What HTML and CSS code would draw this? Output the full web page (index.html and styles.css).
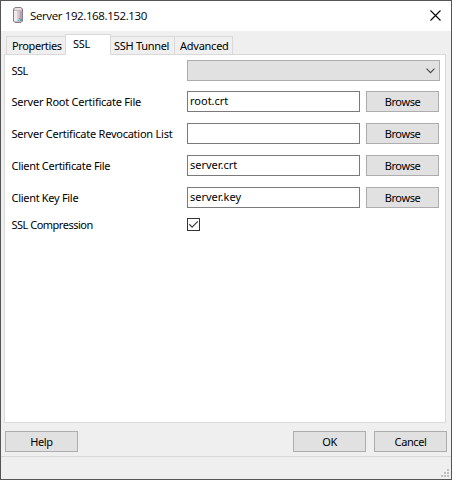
FILE: index.html
```
<!DOCTYPE html>
<html lang="en">
<head>
<meta charset="utf-8">
<title>Server 192.168.152.130</title>
<link rel="stylesheet" href="styles.css">
</head>
<body>
<div class="window">
  <header class="titlebar">
    <svg class="server-icon" width="12" height="18" viewBox="0 0 12 18">
      <path d="M1.5 3L3 1.5h6L10.5 3v12L9 16.5H3L1.5 15z" fill="#c9b9c0" stroke="#907c86"/>
      <path d="M3 2h6v2H3z" fill="#e9dfe3"/>
      <path d="M2 5h3v10H2z" fill="#f2e9ed"/>
      <path d="M5 5h2v10H5z" fill="#d8cbd1"/>
      <path d="M8 5h2v9H8z" fill="#b5a3ad"/>
      <path d="M7 12h1v1H7zM8 13h2v2H8zM6 14h1v1H6z" fill="#39aeb4"/>
    </svg>
    <h1 class="title">Server 192.168.152.130</h1>
    <svg class="close" width="11" height="11" viewBox="0 0 11 11"><path d="M.5.5l10 10M10.5.5l-10 10" stroke="#000" stroke-width="1.1"/></svg>
  </header>
  <nav class="tabs">
    <div class="tab properties"><span>Properties</span></div>
    <div class="tab active"><span>SSL</span></div>
    <div class="tab tunnel"><span>SSH Tunnel</span></div>
    <div class="tab advanced"><span>Advanced</span></div>
  </nav>
  <main class="panel">
    <div class="row first"><label class="l-ssl">SSL</label>
      <div class="combo"><svg width="9" height="6" viewBox="0 0 9 6"><path d="M.5.7l4 4 4-4" fill="none" stroke="#444" stroke-width="1.1"/></svg></div></div>
    <div class="row"><label>Server Root Certificate File</label><div class="field">root.crt</div><button>Browse</button></div>
    <div class="row"><label>Server Certificate Revocation List</label><div class="field"></div><button>Browse</button></div>
    <div class="row"><label class="l-cert">Client Certificate File</label><div class="field">server.crt</div><button>Browse</button></div>
    <div class="row"><label class="l-key">Client Key File</label><div class="field">server.key</div><button>Browse</button></div>
    <div class="row last"><label class="l-comp">SSL Compression</label>
      <div class="check"><svg width="11" height="11" viewBox="0 0 11 11"><path d="M1.3 5.3l2.8 2.8 5.7-5.7" fill="none" stroke="#444" stroke-width="1.3"/></svg></div></div>
  </main>
  <footer class="actions">
    <button class="help">Help</button>
    <button class="ok">OK</button>
    <button class="cancel">Cancel</button>
  </footer>
  <div class="status">
    <svg width="8" height="8" viewBox="0 0 8 8"><path d="M6 0h2v2H6zM3 3h2v2H3zM6 3h2v2H6zM0 6h2v2H0zM3 6h2v2H3zM6 6h2v2H6z" fill="#bfbfbf"/></svg>
  </div>
</div>
</body>
</html>
```
FILE: styles.css
```
* { box-sizing: border-box; }
body { margin: 0; font: 11px/13px "Noto Sans", sans-serif; color: #000; }
.window { width: 452px; height: 480px; border: 1px solid #555; background: #efefef; display: flex; flex-direction: column; }
.titlebar { height: 30px; background: #fff; display: flex; align-items: center; padding: 0 10px 0 11px; }
.server-icon { margin-top: -2px; }
.title { margin: 0 auto 0 6px; font: 11.5px/16px "Open Sans", sans-serif; letter-spacing: -0.38px; white-space: nowrap; }
.close { margin-top: -2px; }
.tabs { height: 24px; display: flex; align-items: flex-end; padding-left: 5px; position: relative; z-index: 1; margin-bottom: -1px; }
.tab { height: 18px; margin-bottom: 1px; border: 1px solid #d9d9d9; border-left: 0; border-bottom: 0; padding: 2px 0 0 5px; white-space: nowrap; letter-spacing: -0.3px; }
.properties { width: 59px; border-left: 1px solid #d9d9d9; border-right: 0; letter-spacing: -0.38px; }
.active { width: 46px; height: 21px; margin-bottom: 0; background: #fff; border-left: 1px solid #d9d9d9; padding-left: 7px; }
.tunnel { width: 64px; padding-left: 3px; }
.advanced { width: 58px; letter-spacing: -0.25px; }
.panel { height: 369px; margin: 0 5px 0 3px; border: 1px solid #d9d9d9; background: #fff; padding: 5px 5px 0 6px; }
.row { display: grid; grid-template-columns: 176px 173px 79px; height: 21px; margin-bottom: 11px; align-items: center; }
.row button { margin-left: 6px; }
.first { grid-template-columns: 176px 253px; margin-bottom: 10px; }
.last { height: 13px; margin-top: -1px; }
label { white-space: nowrap; padding-left: 0.5px; letter-spacing: -0.24px; }
.l-ssl, .l-comp { letter-spacing: -0.5px; }
.l-cert, .l-key { letter-spacing: -0.3px; }
.combo { height: 21px; border: 1px solid #adadad; background: #e1e1e1; display: flex; align-items: center; justify-content: flex-end; padding-right: 4px; }
.field { height: 21px; border: 1px solid #7a7a7a; background: #fff; padding: 2px 0 0 2px; }
button { width: 73px; height: 21px; border: 1px solid #adadad; background: #e1e1e1; padding: 0 0 1px; font: inherit; letter-spacing: -0.4px; color: #000; }
.check { width: 13px; height: 13px; border: 1px solid #333; background: #fff; display: flex; }
.actions { display: flex; padding: 8px 4px 0; height: 33px; }
.ok { margin-left: auto; margin-right: 8px; }
.status { flex: 1; border-top: 1px solid #d7d7d7; display: flex; justify-content: flex-end; align-items: flex-end; padding: 0 2px 2px 0; }
```
